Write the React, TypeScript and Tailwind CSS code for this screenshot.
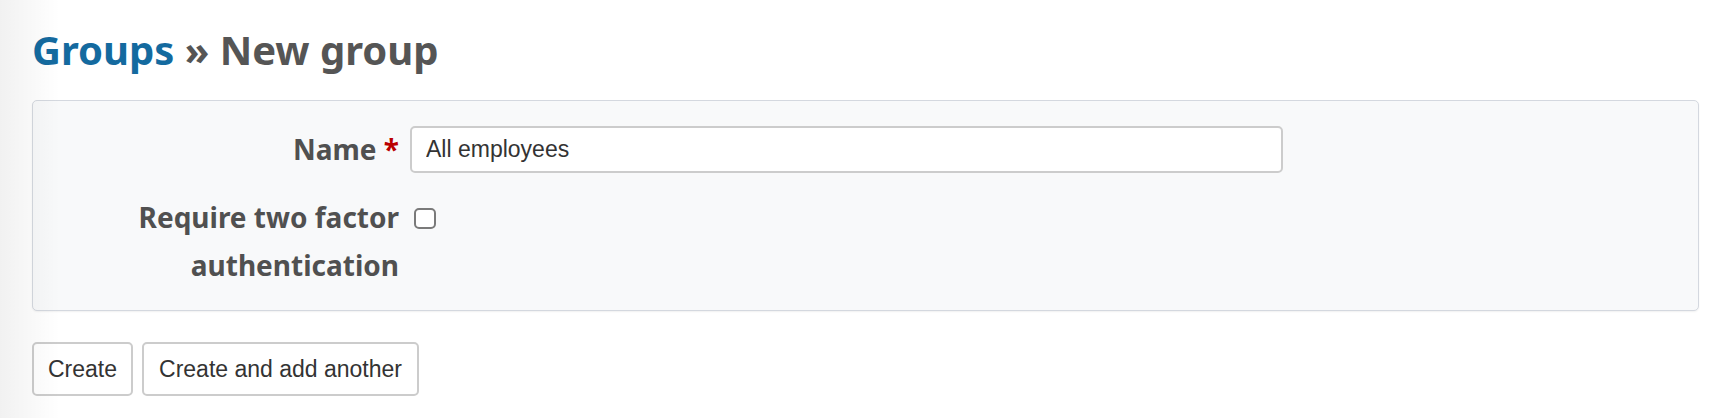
import React from 'react';

const NewGroup: React.FC = () => {
  return (
    <div className="relative min-h-screen bg-white pl-[32px] pr-[29px] font-['Noto_Sans',sans-serif]">
      {/* soft shade along the left edge */}
      <div className="pointer-events-none absolute inset-y-0 left-0 w-[60px] bg-gradient-to-r from-black/[0.055] to-transparent" />

      <h2 className="pt-[26px] pb-[26px] text-[40px] leading-[48px] font-bold text-[#555555]">
        <a href="#" className="text-[#146a9f]">Groups</a> » New group
      </h2>

      {/* form box */}
      <div className="rounded-[5px] border border-[#d4d8df] bg-[#f8f9fa] pt-[24px] pb-[21px] shadow-[0_1px_2px_rgba(0,0,0,0.06)]">
        <div className="flex items-center">
          <label className="w-[366px] text-right text-[28px] leading-[48px] font-bold text-[#505050]">
            Name <span className="text-[#bb0000]">*</span>
          </label>
          <input
            type="text"
            defaultValue="All employees"
            className="ml-[11px] h-[47px] w-[873px] rounded-[5px] border-2 border-[#cccccc] bg-white px-[14px] font-['Liberation_Sans',Arial,sans-serif] text-[23px] text-[#333333] outline-none"
          />
        </div>

        <div className="mt-[20px] flex items-start">
          <label className="w-[366px] text-right text-[28px] leading-[48px] font-bold text-[#505050]">
            Require two factor
            <br />
            authentication
          </label>
          <span className="mt-[15px] ml-[15px] h-[21px] w-[22px] rounded-[5px] border-2 border-[#7a7a7a] bg-white" />
        </div>
      </div>

      <div className="mt-[31px] flex gap-[9px] font-['Liberation_Sans',Arial,sans-serif]">
        <button className="h-[54px] rounded-[5px] border-2 border-[#cccccc] bg-white px-[14px] text-[23px] text-[#333333]">
          Create
        </button>
        <button className="h-[54px] rounded-[5px] border-2 border-[#cccccc] bg-white px-[15px] text-[23px] text-[#333333]">
          Create and add another
        </button>
      </div>
    </div>
  );
};

export default NewGroup;
